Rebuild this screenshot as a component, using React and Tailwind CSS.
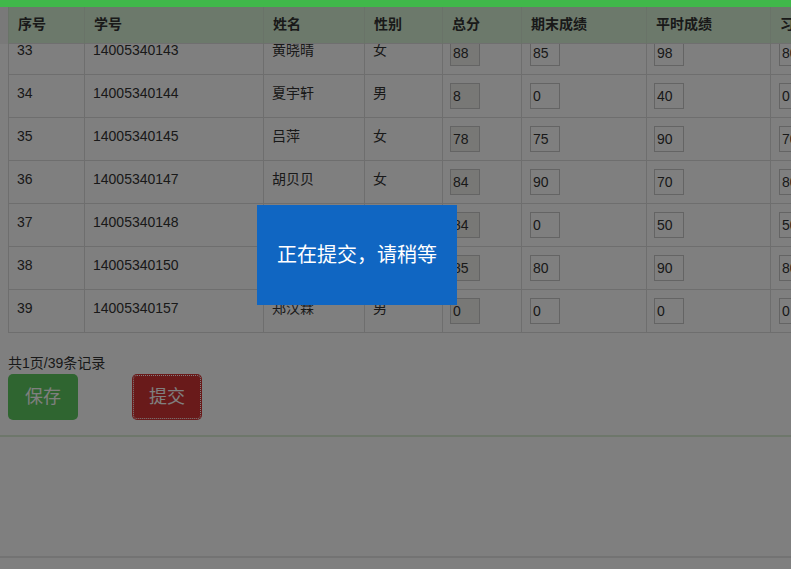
import React from 'react';

const columns = [
  { title: '序号', width: 'w-[76px]' },
  { title: '学号', width: 'w-[179px]' },
  { title: '姓名', width: 'w-[101px]' },
  { title: '性别', width: 'w-[78px]' },
  { title: '总分', width: 'w-[79px]' },
  { title: '期末成绩', width: 'w-[125px]' },
  { title: '平时成绩', width: 'w-[124px]' },
  { title: '习题成绩', width: 'w-[120px]' },
];

const students = [
  { no: 33, id: '14005340143', name: '黄晓晴', sex: '女', total: 88, exam: 85, daily: 98, homework: 80 },
  { no: 34, id: '14005340144', name: '夏宇轩', sex: '男', total: 8, exam: 0, daily: 40, homework: 0 },
  { no: 35, id: '14005340145', name: '吕萍', sex: '女', total: 78, exam: 75, daily: 90, homework: 70 },
  { no: 36, id: '14005340147', name: '胡贝贝', sex: '女', total: 84, exam: 90, daily: 70, homework: 80 },
  { no: 37, id: '14005340148', name: '王思远', sex: '男', total: 84, exam: 0, daily: 50, homework: 50 },
  { no: 38, id: '14005340150', name: '李嘉怡', sex: '女', total: 85, exam: 80, daily: 90, homework: 80 },
  { no: 39, id: '14005340157', name: '郑汉霖', sex: '男', total: 0, exam: 0, daily: 0, homework: 0 },
];

const ScoreInput = ({ value, disabled }) => (
  <input
    type="text"
    defaultValue={value}
    disabled={disabled}
    className={
      'block w-[30px] h-[26px] border border-[#c8c8c8] pl-[2px] text-[14px] text-[#333] outline-none ' +
      (disabled ? 'bg-[#f0f0ec]' : 'bg-white')
    }
  />
);

const App = () => {
  return (
    <div className="relative h-[569px] overflow-hidden bg-white text-[14px] text-[#333] font-['Liberation_Sans','Noto_Sans_CJK_SC',sans-serif]">
      {/* top bar stays above the mask */}
      <div className="fixed top-0 left-0 right-0 h-[7px] bg-[#40b84a] z-30" />

      <div className="absolute top-[7px] left-0 right-0 z-10 bg-[#f2f2f2] pl-2">
        <table className="table-fixed border-collapse w-[882px]">
          <thead>
            <tr className="h-[36px] bg-[#d8f3d6] border-b border-[#dedede]">
              {columns.map((col) => (
                <th
                  key={col.title}
                  className={`${col.width} border-x border-[#d2e6d0] px-[9px] text-left font-bold whitespace-nowrap`}
                >
                  {col.title}
                </th>
              ))}
            </tr>
          </thead>
        </table>
      </div>

      <div className="pt-[31px] px-2">
        <table className="table-fixed border-collapse w-[882px]">
          <tbody>
            {students.map((s) => (
              <tr key={s.no} className="h-[43px]">
                <td className="w-[76px] border border-[#dcdcdc] px-[8px] pt-[8px] align-top leading-5">{s.no}</td>
                <td className="w-[179px] border border-[#dcdcdc] px-[8px] pt-[8px] align-top leading-5">{s.id}</td>
                <td className="w-[101px] border border-[#dcdcdc] px-[8px] pt-[8px] align-top leading-5">{s.name}</td>
                <td className="w-[78px] border border-[#dcdcdc] px-[8px] pt-[8px] align-top leading-5">{s.sex}</td>
                <td className="w-[79px] border border-[#dcdcdc] px-[7px] py-[8px] align-top">
                  <ScoreInput value={s.total} disabled />
                </td>
                <td className="w-[125px] border border-[#dcdcdc] px-[8px] py-[8px] align-top">
                  <ScoreInput value={s.exam} />
                </td>
                <td className="w-[124px] border border-[#dcdcdc] px-[7px] py-[8px] align-top">
                  <ScoreInput value={s.daily} />
                </td>
                <td className="w-[120px] border border-[#dcdcdc] px-[8px] py-[8px] align-top">
                  <ScoreInput value={s.homework} />
                </td>
              </tr>
            ))}
          </tbody>
        </table>

        <p className="mt-[20px] leading-5">共1页/39条记录</p>
        <div className="mt-px flex gap-[54px]">
          <button className="w-[70px] h-[46px] rounded-[5px] bg-[#5eca60] text-white text-[18px]">保存</button>
          <button className="w-[70px] h-[46px] rounded-[5px] bg-[#d23434] text-white text-[18px] outline-dotted outline-1 outline-white -outline-offset-2">
            提交
          </button>
        </div>
      </div>

      <div className="mt-[15px] border-t-2 border-[#ddeed6] h-[121px]" />
      <div className="border-t-2 border-[#e6e6e6]" />

      {/* mask */}
      <div className="fixed inset-0 bg-black/50 z-20" />

      {/* toast */}
      <div className="absolute left-[257px] top-[205px] z-30 w-[200px] h-[100px] bg-[#1066c2] flex items-center justify-center text-white text-[20px]">
        正在提交，请稍等
      </div>
    </div>
  );
};

export default App;
